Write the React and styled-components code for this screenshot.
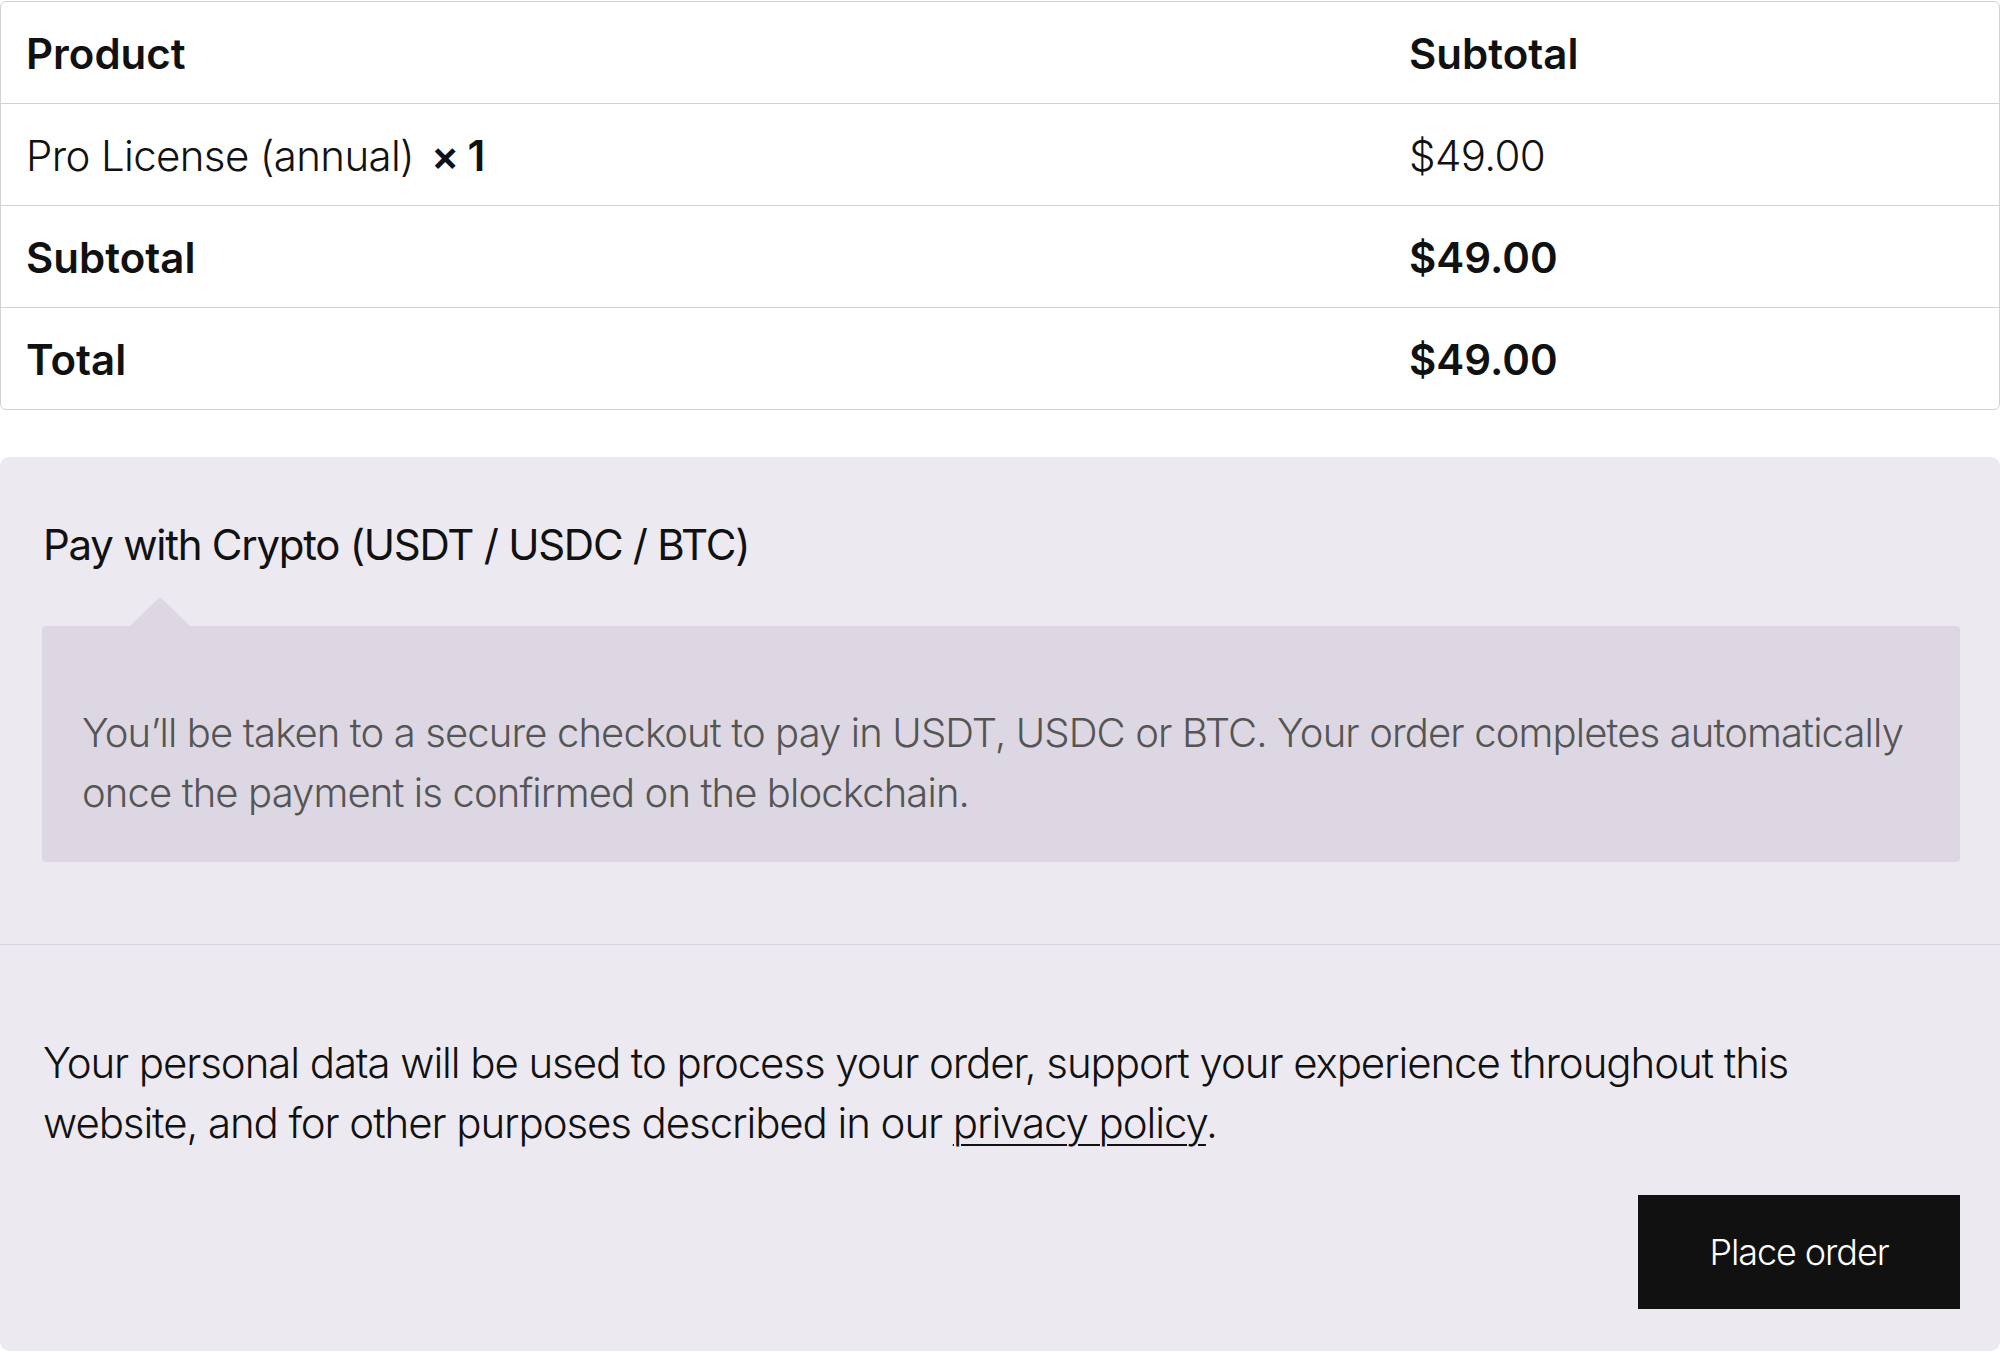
import React from "react";
import styled, { createGlobalStyle } from "styled-components";

const Global = createGlobalStyle`
  html, body { margin: 0; padding: 0; background: #ffffff; }
  body {
    font-family: Inter, "Noto Sans", "Liberation Sans", sans-serif;
    color: #111111;
    -webkit-font-smoothing: antialiased;
  }
  * { box-sizing: border-box; }
`;

const Page = styled.div`
  width: 2000px;
  padding-top: 1px;
  display: flex;
  flex-direction: column;
  gap: 47px;
`;

const Table = styled.div`
  border: 1px solid #d2d2d2;
  border-radius: 6px;
  width: 2000px;
  display: flex;
  flex-direction: column;
`;

const Row = styled.div`
  display: grid;
  grid-template-columns: 1383px 1fr;
  min-height: ${(p) => (p.$last ? 101 : 102)}px;
  border-bottom: ${(p) => (p.$last ? "none" : "1px solid #d2d2d2")};
  align-items: center;
`;

const Cell = styled.div`
  padding: 2px 26px 0 25px;
  font-size: 42px;
  line-height: 63px;
  letter-spacing: ${(p) => (p.$bold ? "0em" : "-0.015em")};
  font-weight: ${(p) => (p.$bold ? 600 : 300)};
  color: #111111;
`;

const Qty = styled.strong`
  font-weight: 600;
  margin-left: 17px;
  letter-spacing: -0.03em;
`;

const PayBox = styled.div`
  background: #ece9f0;
  border-radius: 9px;
  display: flex;
  flex-direction: column;
`;

const Methods = styled.div`
  padding: 58px 40px 82px 42px;
  border-bottom: 1px solid #d7d3dd;
  display: flex;
  flex-direction: column;
  gap: 51px;
`;

const MethodLabel = styled.div`
  font-size: 42px;
  line-height: 60px;
  font-weight: 400;
  letter-spacing: -0.03em;
  color: #111111;
  padding-left: 1px;
`;

const Description = styled.div`
  position: relative;
  background: #dcd7e2;
  border-radius: 4px;
  padding: 77px 40px 39px 40px;
  font-size: 40px;
  line-height: 60px;
  font-weight: 300;
  letter-spacing: -0.022em;
  color: #555555;

  &::before {
    content: "";
    position: absolute;
    left: 88px;
    top: -29px;
    width: 0;
    height: 0;
    border-left: 30px solid transparent;
    border-right: 30px solid transparent;
    border-bottom: 29px solid #dcd7e2;
  }
`;

const PlaceOrder = styled.div`
  padding: 88px 40px 42px 43px;
  display: flex;
  flex-direction: column;
  gap: 42px;
`;

const Privacy = styled.p`
  margin: 0;
  padding-right: 30px;
  font-size: 42px;
  line-height: 60px;
  font-weight: 300;
  letter-spacing: -0.026em;
  color: #111111;

  a {
    color: inherit;
    text-decoration: underline;
    text-underline-offset: 6px;
    text-decoration-thickness: 2px;
  }
`;

const Button = styled.button`
  align-self: flex-end;
  width: 322px;
  height: 114px;
  border: none;
  border-radius: 0;
  background: #111111;
  color: #ffffff;
  font-family: Inter, "Noto Sans", "Liberation Sans", sans-serif;
  font-size: 36px;
  font-weight: 300;
  letter-spacing: -0.03em;
  cursor: pointer;
`;

export default function App() {
  return (
    <>
      <Global />
      <Page>
        <Table>
          <Row>
            <Cell $bold>Product</Cell>
            <Cell $bold>Subtotal</Cell>
          </Row>
          <Row>
            <Cell>
              Pro License (annual)<Qty>×&nbsp;1</Qty>
            </Cell>
            <Cell>$49.00</Cell>
          </Row>
          <Row>
            <Cell $bold>Subtotal</Cell>
            <Cell $bold>$49.00</Cell>
          </Row>
          <Row $last>
            <Cell $bold>Total</Cell>
            <Cell $bold>$49.00</Cell>
          </Row>
        </Table>
        <PayBox>
          <Methods>
            <MethodLabel>Pay with Crypto (USDT / USDC / BTC)</MethodLabel>
            <Description>
              You’ll be taken to a secure checkout to pay in USDT, USDC or BTC.
              Your order completes automatically once the payment is confirmed
              on the blockchain.
            </Description>
          </Methods>
          <PlaceOrder>
            <Privacy>
              Your personal data will be used to process your order, support
              your experience throughout this website, and for other purposes
              described in our <a href="#">privacy policy</a>.
            </Privacy>
            <Button>Place order</Button>
          </PlaceOrder>
        </PayBox>
      </Page>
    </>
  );
}
